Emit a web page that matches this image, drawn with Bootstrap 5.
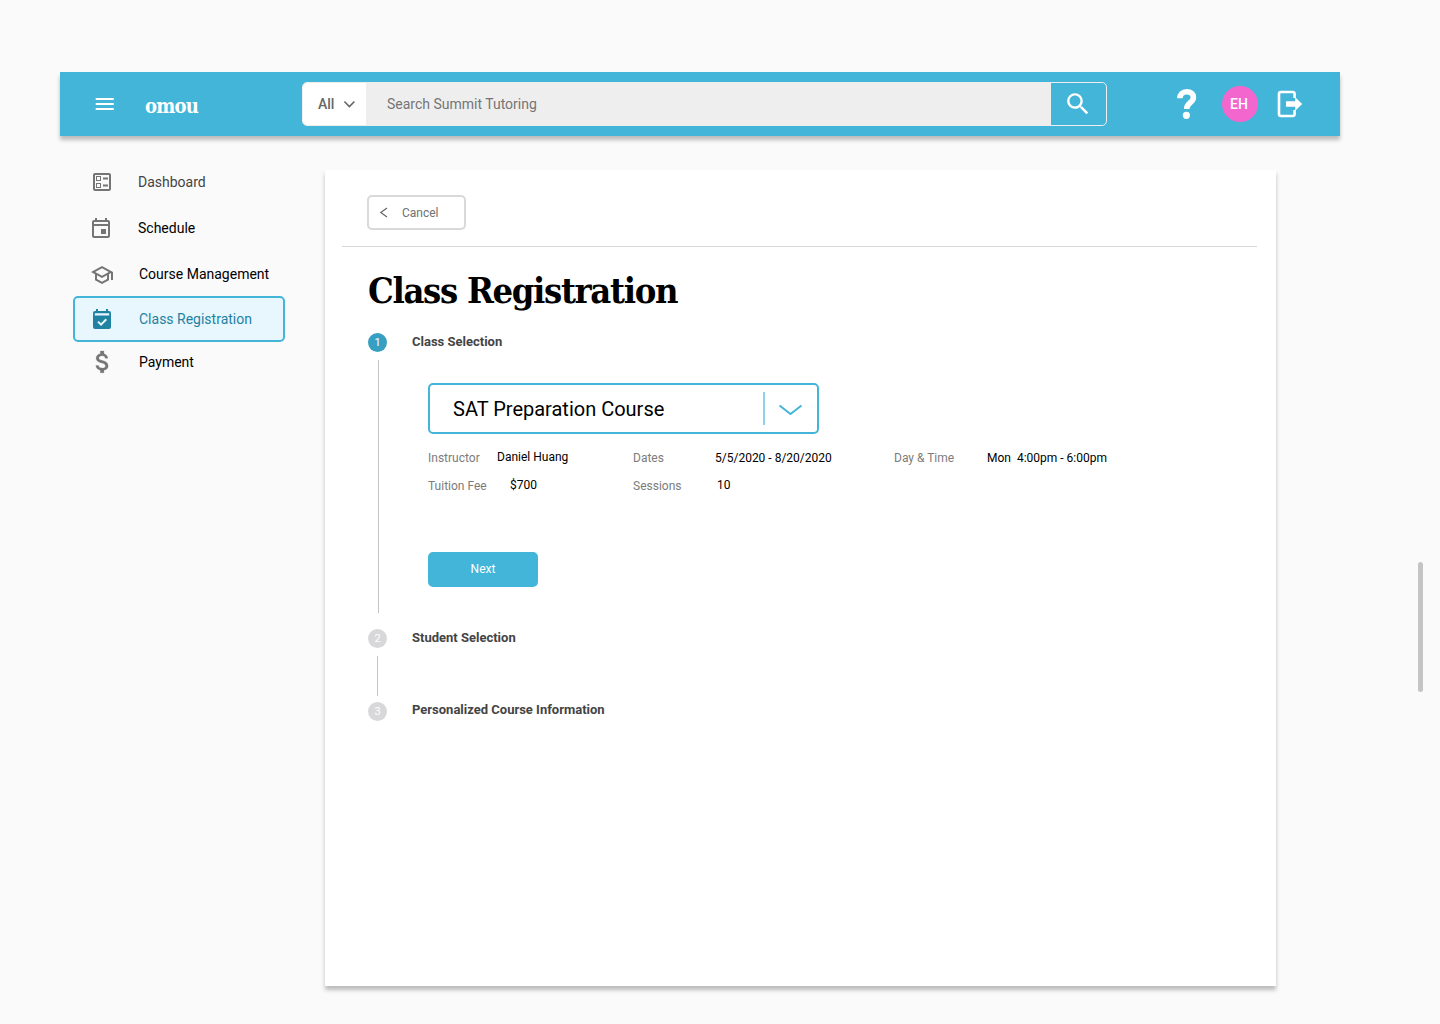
<!DOCTYPE html>
<html lang="en">
<head>
<meta charset="utf-8">
<title>omou – Class Registration</title>
<link href="https://cdn.jsdelivr.net/npm/bootstrap@5.3.0/dist/css/bootstrap.min.css" rel="stylesheet">
<style>
body{background:#fafafa;font-family:Roboto,"Liberation Sans",sans-serif;color:#000;height:1024px;overflow:hidden;font-size:14px;line-height:20px}
svg{display:block;flex:none}
.slab{font-family:"Roboto Slab","DejaVu Serif Condensed","DejaVu Serif",serif;font-weight:700}
.shell{width:1340px;padding:72px 0 0 60px}
.topbar{height:64px;background:#43b5d9;box-shadow:0 4px 4px rgba(0,0,0,.25);padding-left:33px;color:#fff}
.brand{font-size:20px;line-height:24px;letter-spacing:-.75px;width:157px;margin-left:28px;padding-top:3px}
.search{width:805px;height:44px;border:1px solid #eee;border-radius:5px;overflow:hidden}
.scope{width:63px;background:#fff;color:#666;padding-left:15px}
.query{background:#eee;color:#757575;width:685px;padding-left:21px}
.avatar-dot{width:36px;height:36px;background:#f266cd;margin-left:24px}
.side{width:212px;margin-left:13px;padding-top:23px}
.side .item{height:46px;border:2px solid transparent;border-radius:5px;padding-left:15px;color:#000;text-decoration:none}
.side .item.first{color:#444}
.side .item.course{height:45px}
.side .item.pay{height:40px}
.side .wide{margin-left:25px}
.side .item svg{fill:#757575}
.side .item.on{background:#e8f6fe;border-color:#43b5d9;color:#1f82a1}
.side .item.on svg{fill:#1f82a1}
.panel{width:951px;height:816px;margin:34px 0 0 40px;background:#fff;box-shadow:0 4px 4px rgba(0,0,0,.25)}
.cancel{width:99px;height:35px;border:2px solid #dbd8da;border-radius:5px;margin:25px 0 0 42px;color:#707070;font-size:12px;padding:0 0 0 10px;background:#fff}
.rule{height:1px;background:#d8d8d8;margin:16px 19px 0 17px}
h1.title{font-size:36px;line-height:44px;letter-spacing:-1.32px;margin:21px 0 1px 43px;width:330px;white-space:nowrap}
.steps{padding-left:43px}
.num{width:19px;height:19px;border-radius:50%;background:#d8d8da;color:#fff;font-size:11px;line-height:19px;text-align:center;flex:none}
.num.on{background:#369fc2}
.label{font-size:13px;font-weight:700;color:#444;margin-left:25px;line-height:17px}
.line{width:1px;background:#c4c4c4;flex:none}
.picker{width:391px;height:51px;border:2px solid #43b5d9;border-radius:5px;font-size:20px;padding-left:23px}
.facts{font-size:12px;line-height:16px;color:#7c7c7c}
.facts b{font-weight:400;color:#000}
.facts b.raised{display:inline-block;margin-top:-1px;padding-bottom:1px}
.facts>div{height:28px}
.next{width:110px;height:35px;margin-top:45.6px;background:#43b5d9;border-radius:5px;color:#fff;font-size:12px;border:0;padding:0 0 1px}
.thumb{width:5px;height:130px;margin:562px 0 0 78px;background:#c4c4c4;border-radius:3px;flex:none}
</style>
</head>
<body>
<div class="d-flex">
<div class="shell flex-shrink-0">
  <header class="topbar d-flex align-items-center">
    <svg width="24" height="24" viewBox=".3 0 24 24" fill="#fff"><path d="M3 18h18v-2H3v2zm0-5h18v-2H3v2zm0-7v2h18V6H3z"/></svg>
    <div class="brand slab">omou</div>
    <div class="search d-flex">
      <div class="scope d-flex align-items-center fw-medium">All<svg style="margin-left:8px" width="14" height="10" fill="none" stroke="#666" stroke-width="1.600"><path d="M2.400 2.500l5 5 5-5"/></svg></div>
      <div class="query d-flex align-items-center">Search Summit Tutoring</div>
      <div class="flex-fill d-flex align-items-center ps-2"><svg class="ms-1" width="29" height="29" viewBox="-.4 .4 24 24" fill="#fff"><path d="M15.500 14h-.79l-.28-.27A6.471 6.471 0 0 0 16 9.500 6.500 6.500 0 1 0 9.500 16c1.610 0 3.090-.59 4.230-1.570l.27.28v.79l5 4.990L20.490 19l-4.990-5zm-6 0C7.010 14 5 11.990 5 9.500S7.010 5 9.500 5 14 7.010 14 9.500 11.990 14 9.500 14z"/></svg></div>
    </div>
    <svg style="margin-left:69px" width="22" height="32" fill="none" stroke="#fff"><path d="M3.900 10.300C3.900 6.200 6.700 3.700 10.700 3.700s6.700 2.100 6.700 5.700c0 5.300-6.700 5.300-6.700 11.500" stroke-width="5.600"/><circle cx="10.400" cy="27.300" r="3.600" fill="#fff" stroke="none"/></svg>
    <div class="avatar-dot rounded-circle d-flex align-items-center justify-content-center fw-medium"><span style="padding-right:2px">EH</span></div>
    <svg style="margin-left:19px" width="26" height="28" fill="none" stroke="#fff" stroke-width="2.600"><path d="M17.600 8V4q0-2-2-2H4Q2 2 2 4v20q0 2 2 2h11.600q2 0 2-2v-4"/><path d="M9 11.300h9.200V7.200l7 6.800-7 6.800v-4.100H9z" fill="#fff" stroke="none"/></svg>
  </header>
  <div class="d-flex">
    <nav class="side flex-shrink-0">
      <a class="item first d-flex align-items-center"><svg width="24" height="24"><path d="M13 7.500h5v2h-5zm0 7h5v2h-5zM19 3H5c-1.100 0-2 .9-2 2v14c0 1.100.9 2 2 2h14c1.100 0 2-.9 2-2V5c0-1.100-.9-2-2-2zm0 16H5V5h14v14zM11 6H6v5h5V6zm-1 4H7V7h3v3zm1 3H6v5h5v-5zm-1 4H7v-3h3v3z"/></svg><span class="ms-4">Dashboard</span></a>
      <a class="item d-flex align-items-center"><svg width="24" height="24" viewBox="1 0 24 24"><path d="M19 4h-1V2h-2v2H8V2H6v2H5c-1.110 0-1.990.9-1.990 2L3 20c0 1.100.89 2 2 2h14c1.100 0 2-.9 2-2V6c0-1.100-.9-2-2-2zm0 16H5V10h14v10zm0-12H5V6h14v2zm-7 5h5v5h-5v-5z"/></svg><span class="ms-4">Schedule</span></a>
      <a class="item course d-flex align-items-center"><svg width="24" height="24" viewBox="0 -1 24 24"><path d="M12 3L1 9l4 2.180v6L12 21l7-3.820v-6l2-1.090V17h2V9L12 3zm6.820 6L12 12.720 5.180 9 12 5.280 18.820 9zM17 15.990l-5 2.730-5-2.730v-3.720L12 15l5-2.730v3.720z"/></svg><span class="wide">Course Management</span></a>
      <a class="item on d-flex align-items-center"><svg width="24" height="24"><path fill-rule="evenodd" d="M6 2h2v2h8V2h2v2h1q2 0 2 2v14q0 2-2 2H5q-2 0-2-2V6q0-2 2-2h1zM4.800 6.300v2.200h14.400v-2.200zM11 19l6-6-1.400-1.400-4.600 4.600-2.300-2.300L7.300 15.300z"/></svg><span class="wide">Class Registration</span></a>
      <a class="item pay d-flex align-items-center"><svg width="24" height="28" viewBox="0 0 24 28"><g transform="translate(-1.800 -.6) scale(1.210)" stroke="#757575" stroke-width=".2" stroke-linejoin="round"><path d="M11.800 10.900c-2.270-.59-3-1.200-3-2.150 0-1.090 1.010-1.850 2.700-1.850 1.780 0 2.440.85 2.500 2.100h2.210c-.07-1.720-1.120-3.300-3.210-3.810V3h-3v2.160c-1.940.42-3.500 1.680-3.500 3.610 0 2.310 1.910 3.460 4.700 4.130 2.500.6 3 1.480 3 2.410 0 .69-.49 1.790-2.700 1.790-2.060 0-2.870-.92-2.980-2.100h-2.200c.12 2.190 1.760 3.420 3.680 3.830V21h3v-2.150c1.950-.37 3.500-1.500 3.500-3.550 0-2.840-2.430-3.810-4.700-4.400z"/></g></svg><span class="wide">Payment</span></a>
    </nav>
    <main class="panel flex-shrink-0 d-flex flex-column">
      <button class="cancel d-flex align-items-center"><svg width="10" height="12" fill="none" stroke="#666" stroke-width="1.200"><path d="M8 1L1.800 5.500 8 10"/></svg><span style="margin-left:13px">Cancel</span></button>
      <div class="rule"></div>
      <h1 class="slab title">Class Registration</h1>
      <section class="steps">
        <div class="d-flex" style="padding-top:20px;height:47px"><div class="num on">1</div><div class="label">Class Selection</div></div>
        <div class="d-flex" style="padding-left:10px;height:253px">
          <div class="line"></div>
          <div style="margin-left:49px;padding-top:23px">
            <div class="picker d-flex align-items-center"><span style="width:310px">SAT Preparation Course</span><svg width="40" height="34" fill="none" stroke="#43b5d9" stroke-width="2"><path d="M1 0v33" stroke="#8fd3e8"/><path d="M16.500 13.500L27.500 22l11-8.500"/></svg></div>
            <div class="facts d-flex pt-3">
              <div class="d-flex" style="width:205px"><span style="width:69px">Instructor</span><b class="raised">Daniel Huang</b></div>
              <div style="width:261px"><span class="d-inline-block" style="width:82px">Dates</span><b>5/5/2020 - 8/20/2020</b></div>
              <div><span class="d-inline-block" style="width:93px">Day &amp; Time</span><b>Mon&nbsp; 4:00pm - 6:00pm</b></div>
            </div>
            <div class="facts d-flex">
              <div class="d-flex" style="width:205px"><span style="width:82px">Tuition Fee</span><b class="raised">$700</b></div>
              <div class="d-flex"><span style="width:84px">Sessions</span><b class="raised">10</b></div>
            </div>
            <button class="next">Next</button>
          </div>
        </div>
        <div class="d-flex" style="padding-top:16px;height:43px"><div class="num">2</div><div class="label">Student Selection</div></div>
        <div class="line" style="height:40px;margin-left:9px"></div>
        <div class="d-flex" style="padding-top:5px"><div class="num" style="margin-top:1px">3</div><div class="label">Personalized Course Information</div></div>
      </section>
    </main>
  </div>
</div>
<div class="thumb"></div>
</div>
<script src="https://cdn.jsdelivr.net/npm/bootstrap@5.3.0/dist/js/bootstrap.bundle.min.js"></script>
</body>
</html>
